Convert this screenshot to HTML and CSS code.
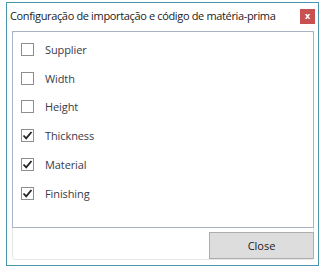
FILE: index.html
```html
<!DOCTYPE html>
<html>
<head>
<meta charset="utf-8">
<link rel="stylesheet" href="styles.css">
</head>
<body>
<div class="window">
  <div class="titlebar">
    <span class="title">Configuração de importação e código de matéria-prima</span>
    <span class="close-x">x</span>
  </div>
  <div class="content">
    <div class="panel">
      <div class="list">
        <div class="row"><span class="box"></span><span class="label">Supplier</span></div>
        <div class="row"><span class="box"></span><span class="label">Width</span></div>
        <div class="row"><span class="box"></span><span class="label">Height</span></div>
        <div class="row"><span class="box checked"><svg width="11" height="11" viewBox="0 0 11 11"><path d="M1.5 5.5 L4.2 8.3 L9.5 2" fill="none" stroke="#222" stroke-width="1.8"/></svg></span><span class="label">Thickness</span></div>
        <div class="row"><span class="box checked"><svg width="11" height="11" viewBox="0 0 11 11"><path d="M1.5 5.5 L4.2 8.3 L9.5 2" fill="none" stroke="#222" stroke-width="1.8"/></svg></span><span class="label">Material</span></div>
        <div class="row"><span class="box checked"><svg width="11" height="11" viewBox="0 0 11 11"><path d="M1.5 5.5 L4.2 8.3 L9.5 2" fill="none" stroke="#222" stroke-width="1.8"/></svg></span><span class="label">Finishing</span></div>
      </div>
      <div class="footer">
        <button class="btn">Close</button>
      </div>
    </div>
  </div>
</div>
</body>
</html>
```

FILE: styles.css
```css
html, body {
  margin: 0;
  padding: 0;
  background: #ffffff;
}
body {
  font-family: "Open Sans", "Noto Sans", sans-serif;
  width: 324px;
  height: 270px;
  overflow: hidden;
}
.window {
  box-sizing: border-box;
  margin: 2px 0 0 6px;
  width: 313px;
  height: 264px;
  border: 1px solid #4a97ad;
  background: #ffffff;
  display: flex;
  flex-direction: column;
}
.titlebar {
  height: 30px;
  display: flex;
  align-items: flex-start;
  justify-content: space-between;
  padding: 5px 3px 0 3px;
  box-sizing: border-box;
}
.title {
  font-size: 11px;
  color: #222;
  line-height: 16px;
  letter-spacing: -0.35px;
}
.close-x {
  width: 15px;
  height: 15px;
  background: #c75050;
  color: #fff;
  font-size: 9px;
  font-weight: bold;
  line-height: 14px;
  text-align: center;
  margin-top: 1px;
}
.content {
  flex: 1;
  padding: 0 4px 5px 5px;
  display: flex;
  flex-direction: column;
}
.panel {
  flex: 1;
  border: 1px solid #e6e6e6;
  border-radius: 3px;
  display: flex;
  flex-direction: column;
}
.list {
  box-sizing: border-box;
  height: 197px;
  margin: -1px -1px 0 -1px;
  border: 1px solid #a7b4c4;
  padding-top: 3px;
}
.row {
  height: 28.8px;
  display: flex;
  align-items: center;
  padding-left: 8px;
}
.box {
  box-sizing: border-box;
  width: 13px;
  height: 13px;
  border: 1px solid #8e8e8e;
  background: #fff;
  display: flex;
  align-items: center;
  justify-content: center;
}
.box svg {
  display: block;
}
.label {
  margin-left: 11px;
  font-size: 11px;
  color: #3a3a48;
  letter-spacing: -0.1px;
}
.footer {
  display: flex;
  justify-content: flex-end;
  padding: 4px 0 0 0;
}
.btn {
  box-sizing: border-box;
  width: 105px;
  height: 27px;
  background: #dddddd;
  border: 1px solid #adadad;
  font-family: "Open Sans", "Noto Sans", sans-serif;
  font-size: 11px;
  color: #222;
  padding: 0;
  margin-right: -1px;
}
```
